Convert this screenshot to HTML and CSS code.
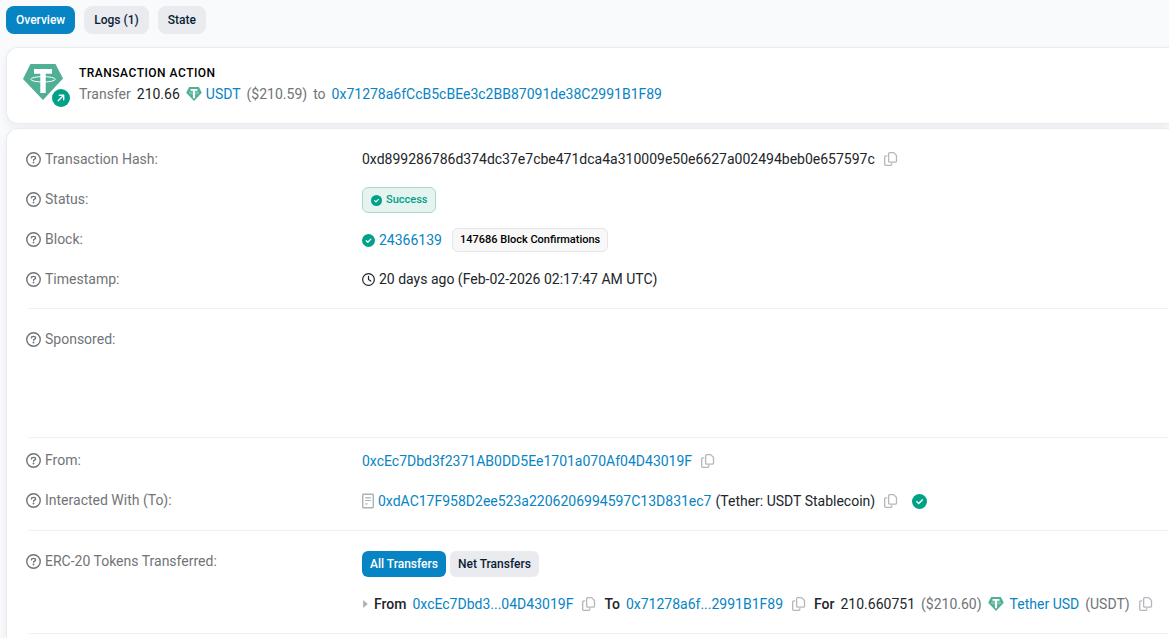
FILE: index.html
```
<!DOCTYPE html>
<html lang="en">
<head>
  <meta charset="utf-8">
  <title>Transaction Details</title>
  <link rel="stylesheet" href="styles.css">
</head>
<body>
  <svg class="sprite" aria-hidden="true">
    <symbol id="help" viewBox="0 0 16 16">
      <circle cx="8" cy="8" r="7.2" fill="none" stroke="currentColor" stroke-width="1.5"/>
      <path d="M5.800 6.300C5.800 5.200 6.600 4.700 8 4.700s2.200.6 2.200 1.600c0 1.200-2.100 1.300-2.100 2.500" fill="none" stroke="currentColor" stroke-width="1.500" stroke-linecap="round"/>
      <circle cx="8" cy="11.200" r="1" fill="currentColor"/>
    </symbol>
    <symbol id="copy" viewBox="0 0 16 16">
      <path d="M7.200 1.200h4.200l3 3v5.900a1.200 1.200 0 0 1-1.200 1.200h-6A1.200 1.200 0 0 1 6 10.100V2.400a1.200 1.200 0 0 1 1.200-1.200zM4 4.700H3a1.200 1.200 0 0 0-1.200 1.200v7.700A1.200 1.200 0 0 0 3 14.800h5.200a1.200 1.200 0 0 0 1.200-1.200v-.7" fill="none" stroke="currentColor" stroke-width="1.400" stroke-linecap="round" stroke-linejoin="round"/>
    </symbol>
    <symbol id="check" viewBox="0 0 16 16">
      <circle cx="8" cy="8" r="8" fill="#00a186"/>
      <path d="M5.200 8.200l2 1.900 3.700-3.800" fill="none" stroke="#fff" stroke-width="1.600" stroke-linecap="round" stroke-linejoin="round"/>
    </symbol>
    <symbol id="clock" viewBox="0 0 16 16">
      <circle cx="8" cy="8" r="7.200" fill="none" stroke="currentColor" stroke-width="1.500"/>
      <path d="M8 4v4l2.800 1.900" fill="none" stroke="currentColor" stroke-width="1.500" stroke-linecap="round" stroke-linejoin="round"/>
    </symbol>
    <symbol id="contract" viewBox="0 0 12 16">
      <rect x=".7" y="1.200" width="10.600" height="13.600" rx="1" fill="none" stroke="currentColor" stroke-width="1.400"/>
      <path d="M3.200 4.800h5.600M3.200 7.500h5.600M3.200 10.900h2.400" fill="none" stroke="currentColor" stroke-width="1.200"/>
    </symbol>
    <symbol id="tether" viewBox="0 0 40 36">
      <path d="M7.500 0h25L40 14.500 20 36 0 15z" fill="#50af95"/>
      <path d="M11 5h18v4.800h-6.300V29h-5.400V9.800H11z" fill="#fff"/>
      <ellipse cx="20" cy="15.300" rx="12.300" ry="2.700" fill="none" stroke="#fff" stroke-width="1"/>
    </symbol>
  </svg>

  <nav class="tabs">
    <button class="tab active" type="button">Overview</button>
    <button class="tab" type="button">Logs (1)</button>
    <button class="tab" type="button">State</button>
  </nav>

  <section class="card action">
    <div class="action-icon">
      <svg class="token-logo"><use href="#tether"/></svg>
      <svg class="action-badge" viewBox="0 0 18 18">
        <circle cx="9" cy="9" r="9" fill="#00a186"/>
        <path d="M6.200 11.800l5.300-5.300M7.300 6.300h4.400v4.400" fill="none" stroke="#fff" stroke-width="1.400" stroke-linecap="round" stroke-linejoin="round"/>
      </svg>
    </div>
    <div>
      <h1 class="action-title">TRANSACTION ACTION</h1>
      <div class="line">
        <span class="muted">Transfer</span>
        <span>210.66</span>
        <span class="token"><svg class="icon-token"><use href="#tether"/></svg><a href="#">USDT</a></span>
        <span class="muted">($210.59)</span>
        <span class="muted">to</span>
        <a href="#">0x71278a6fCcB5cBEe3c2BB87091de38C2991B1F89</a>
      </div>
    </div>
  </section>

  <section class="card details">
    <div class="group">
      <div class="row">
        <div class="label"><svg class="icon-help"><use href="#help"/></svg>Transaction Hash:</div>
        <div class="value">
          <span>0xd899286786d374dc37e7cbe471dca4a310009e50e6627a002494beb0e657597c</span>
          <button class="copy" type="button" aria-label="Copy"><svg><use href="#copy"/></svg></button>
        </div>
      </div>
      <div class="row">
        <div class="label"><svg class="icon-help"><use href="#help"/></svg>Status:</div>
        <div class="value low">
          <span class="badge success"><svg class="icon-sm"><use href="#check"/></svg>Success</span>
        </div>
      </div>
      <div class="row">
        <div class="label"><svg class="icon-help"><use href="#help"/></svg>Block:</div>
        <div class="value low">
          <svg class="icon-md"><use href="#check"/></svg>
          <a href="#">24366139</a>
          <span class="badge confirmations">147686 Block Confirmations</span>
        </div>
      </div>
      <div class="row">
        <div class="label"><svg class="icon-help"><use href="#help"/></svg>Timestamp:</div>
        <div class="value">
          <svg class="icon-md"><use href="#clock"/></svg>
          <span>20 days ago (Feb-02-2026 02:17:47 AM UTC)</span>
        </div>
      </div>
    </div>

    <div class="group sponsored">
      <div class="row">
        <div class="label"><svg class="icon-help"><use href="#help"/></svg>Sponsored:</div>
      </div>
    </div>

    <div class="group addresses">
      <div class="row">
        <div class="label"><svg class="icon-help"><use href="#help"/></svg>From:</div>
        <div class="value low">
          <a href="#">0xcEc7Dbd3f2371AB0DD5Ee1701a070Af04D43019F</a>
          <button class="copy" type="button" aria-label="Copy"><svg><use href="#copy"/></svg></button>
        </div>
      </div>
      <div class="row">
        <div class="label"><svg class="icon-help"><use href="#help"/></svg>Interacted With (To):</div>
        <div class="value low">
          <svg class="icon-contract"><use href="#contract"/></svg>
          <a href="#">0xdAC17F958D2ee523a2206206994597C13D831ec7</a>
          <span>(Tether: USDT Stablecoin)</span>
          <button class="copy" type="button" aria-label="Copy"><svg><use href="#copy"/></svg></button>
          <svg class="icon-verified"><use href="#check"/></svg>
        </div>
      </div>
    </div>

    <div class="group tokens">
      <div class="row">
        <div class="label"><svg class="icon-help"><use href="#help"/></svg>ERC-20 Tokens Transferred:</div>
        <div class="value">
          <button class="pill active" type="button">All Transfers</button>
          <button class="pill" type="button">Net Transfers</button>
        </div>
      </div>
      <div class="row">
        <div class="value transfer">
          <svg class="caret" viewBox="0 0 6 10"><path d="M0 0l6 5-6 5z" fill="#b0b3b6"/></svg>
          <b>From</b>
          <a href="#">0xcEc7Dbd3...04D43019F</a>
          <button class="copy" type="button" aria-label="Copy"><svg><use href="#copy"/></svg></button>
          <b>To</b>
          <a href="#">0x71278a6f...2991B1F89</a>
          <button class="copy" type="button" aria-label="Copy"><svg><use href="#copy"/></svg></button>
          <b>For</b>
          <span>210.660751</span>
          <span class="muted">($210.60)</span>
          <span class="token wide"><svg class="icon-token"><use href="#tether"/></svg><a href="#">Tether USD</a></span>
          <span class="muted">(USDT)</span>
          <button class="copy" type="button" aria-label="Copy"><svg><use href="#copy"/></svg></button>
        </div>
      </div>
    </div>
    <div class="group"></div>
  </section>
</body>
</html>
```
FILE: styles.css
```
* {
  box-sizing: border-box;
}
body {
  margin: 0;
  padding: 6px 0 0 6px;
  background: #f9fafc;
  color: #212529;
  font-family: Roboto, "Liberation Sans", sans-serif;
  font-size: 14px;
  line-height: 22px;
  overflow: hidden;
}
a {
  color: #0784c3;
  text-decoration: none;
}
button {
  border: 0;
  font-family: inherit;
  cursor: pointer;
}
svg {
  display: block;
  flex: none;
}
b {
  font-weight: 500;
}
.sprite {
  position: absolute;
  width: 0;
  height: 0;
}
.muted,
.label {
  color: #717477;
}
.tabs {
  display: flex;
  gap: 9px;
  margin-bottom: 13px;
}
.tab,
.pill {
  background: #e9ebee;
  color: #081d35;
  font-weight: 500;
  white-space: nowrap;
}
.tab {
  height: 28px;
  padding: 0 10px;
  border-radius: 8px;
  font-size: 12px;
}
.pill {
  height: 26px;
  padding: 0 8px;
  border-radius: 6px;
  font-size: 12px;
}
.tab.active,
.pill.active {
  background: #0784c3;
  color: #fff;
}
.card {
  background: #fff;
  border: 1px solid #e9ecef;
  border-right: 0;
  border-radius: 12px 0 0 12px;
  box-shadow: 0 4px 8px rgba(8, 29, 53, 0.06);
}
.action {
  display: flex;
  gap: 8px;
  padding: 16px 16px 18px;
  margin-bottom: 4px;
}
.action-icon {
  position: relative;
  width: 48px;
}
.token-logo {
  width: 40px;
  height: 36px;
}
.action-badge {
  position: absolute;
  left: 29px;
  top: 25px;
  width: 18px;
  height: 18px;
}
.action-title {
  margin: 0;
  color: #000;
  font-size: 12px;
  font-weight: 500;
  line-height: 19px;
  letter-spacing: 0.5px;
}
.line,
.value,
.label,
.token {
  display: flex;
  align-items: center;
  gap: 4px;
  white-space: nowrap;
}
.line,
.transfer {
  gap: 6px;
}
.icon-token {
  width: 16px;
  height: 14px;
}
.token.wide {
  gap: 6px;
}
.details {
  padding: 0 0 10px 21px;
}
.group {
  padding: 10px 0 9px;
  border-top: 1px solid #eff1f3;
}
.group:first-child {
  border-top: 0;
}
.group.sponsored {
  min-height: 129px;
}
.group.addresses {
  padding: 2px 0 10px;
}
.group.tokens {
  padding-bottom: 12px;
}
.row {
  display: grid;
  grid-template-columns: 336px 1fr;
  margin-left: -2px;
}
.label,
.value {
  min-height: 40px;
}
.value {
  grid-column: 2;
}
.value.low {
  padding-top: 2px;
}
.tokens .value {
  padding-top: 6px;
}
.icon-help {
  width: 15px;
  height: 15px;
}
.icon-sm {
  width: 11px;
  height: 11px;
}
.icon-md {
  width: 13px;
  height: 13px;
}
.icon-contract {
  width: 12px;
  height: 16px;
  color: #adb0b4;
}
.icon-verified {
  width: 15px;
  height: 15px;
  margin-left: 6px;
}
.copy {
  padding: 0;
  margin: 0 4px;
  background: none;
  color: #b4b7bb;
}
.transfer .copy {
  margin: 0 2px;
}
.copy svg {
  width: 15px;
  height: 16px;
}
.badge {
  display: flex;
  align-items: center;
  gap: 4px;
  height: 26px;
  padding: 0 8px;
  border: 1px solid #e3e5e7;
  border-radius: 6px;
  font-size: 11px;
  font-weight: 500;
}
.badge.success {
  background: #e5f4f1;
  border-color: #a6dbd0;
  color: #00a186;
}
.badge.confirmations {
  height: 24px;
  padding: 0 7px;
  margin-left: 6px;
  background: #f8f8f9;
  color: #000;
}
.caret {
  width: 5px;
  height: 8px;
}
.transfer {
  padding-left: 1px;
}
```
